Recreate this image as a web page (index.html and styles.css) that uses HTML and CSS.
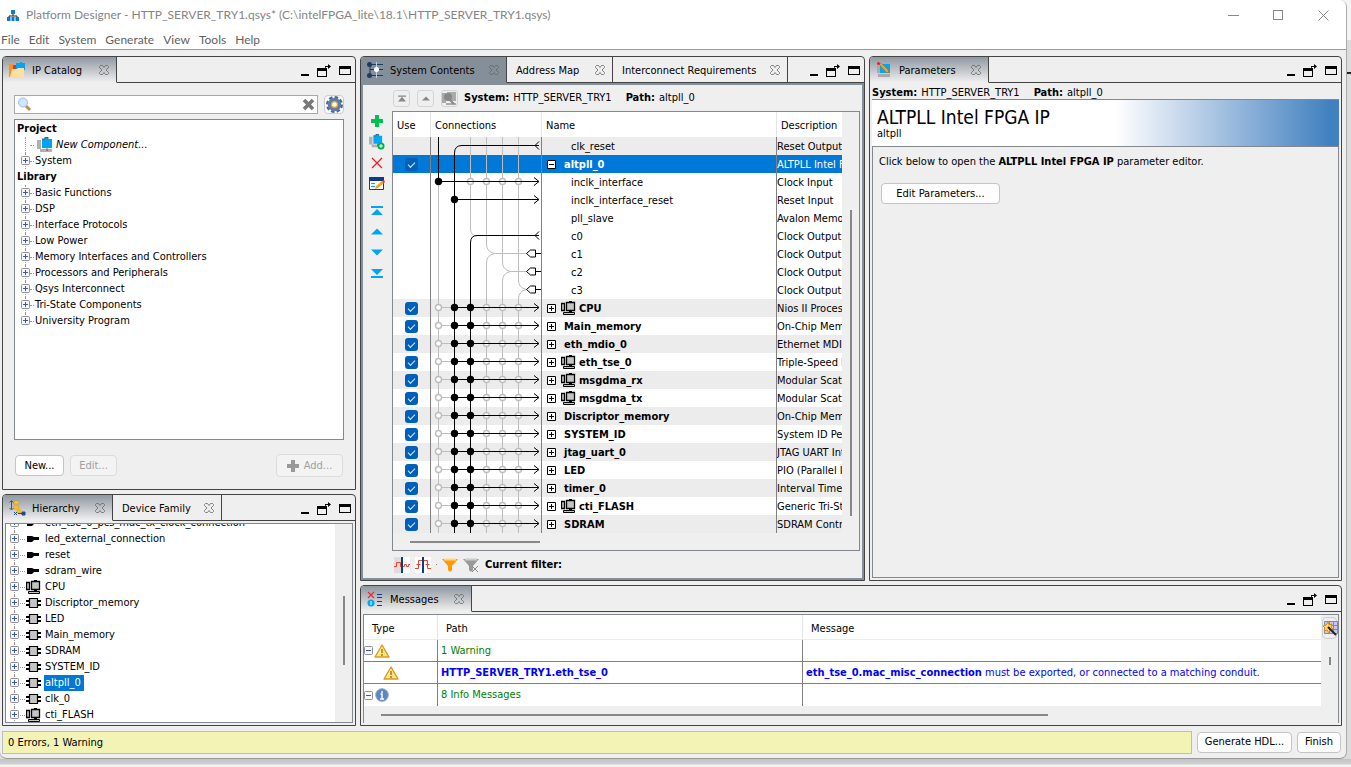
FILE: index.html
```html
<!DOCTYPE html>
<html lang="en">
<head>
<meta charset="utf-8">
<title>Platform Designer - HTTP_SERVER_TRY1.qsys*</title>
<link rel="stylesheet" href="styles.css">
</head>
<body>
<svg class="defs" aria-hidden="true">
  <symbol id="close" viewBox="0 0 10 10"><path d="M1.500.5h2L5 2.500 6.500.5h2l1 1v1L7 5l2.500 2.500v1l-1 1h-2L5 7.500 3.500 9.500h-2l-1-1v-1L3 5 .5 2.500v-1z" fill="none" stroke="#666" stroke-width=".8"/></symbol>
  <symbol id="min" viewBox="0 0 8 12"><path d="M0 9h8v2H0z"/></symbol>
  <symbol id="detach" viewBox="0 0 14 13"><path d="M0 4h10v9H0zM1 7v5h8V7z" fill-rule="evenodd"/><path d="M8 3.500V2h3V0l3 2.500L11 5V3H9v1z"/></symbol>
  <symbol id="max" viewBox="0 0 12 10"><path d="M0 0h12v9H0zM1 3v5h10V3z" fill-rule="evenodd"/></symbol>
  <symbol id="plus" viewBox="0 0 9 9"><rect x=".5" y=".5" width="8" height="8" rx="1" fill="#f7f7f7" stroke="#919191"/><path d="M2 4.500h5M4.500 2v5" stroke="#3b57a5"/></symbol>
  <symbol id="minus" viewBox="0 0 9 9"><rect x=".5" y=".5" width="8" height="8" rx="1" fill="#f7f7f7" stroke="#919191"/><path d="M2 4.500h5" stroke="#3b57a5"/></symbol>
  <symbol id="bplus" viewBox="0 0 9 9"><path d="M.5.5h8v8h-8z" fill="#fff" stroke="#000"/><path d="M2 4.500h5M4.500 2v5" stroke="#000"/></symbol>
  <symbol id="bminus" viewBox="0 0 9 9"><path d="M.5.5h8v8h-8z" fill="#fff" stroke="#000"/><path d="M2 4.500h5" stroke="#000"/></symbol>
  <symbol id="port" viewBox="0 0 16 16"><path d="M1 5h5l2 1h5v3H8l-2 2H1z"/></symbol>
  <symbol id="chip" viewBox="0 0 16 16"><path d="M0 6h4M0 10h4M12 6h3M12 10h3" stroke="#000" stroke-width="2"/><path d="M3.500 3.500h8v9h-8z" fill="#c4c4c4" stroke="#000" stroke-width="1.200"/></symbol>
  <symbol id="cpu" viewBox="0 0 16 16"><path d="M.5 3.500h3v7h-3z" fill="#c4c4c4" stroke="#000" stroke-width="1.300"/><path d="M5.500 2.500h8v8h-8z" fill="#c4c4c4" stroke="#000" stroke-width="1.300"/><path d="M8 1h3v1H8zM8 11h3v2H8z"/><path d="M2.500 12.500h11v2h-11z" fill="#c4c4c4" stroke="#000"/></symbol>
  <symbol id="comp" viewBox="0 0 16 16"><path d="M0 3h4v9H0zM3 12h12v3H3z" fill="#b0b0b0"/><path d="M5 2h3V0h3v2h4v9H5z" fill="#00a5f5"/><path d="M5 2h3V0h3v2M10 11v3" stroke="#444" stroke-width=".8" fill="none"/></symbol>
  <symbol id="warn" viewBox="0 0 16 14"><path d="M8 1 15 13H1z" fill="#ffe48a" stroke="#dd9b1f" stroke-width="1.400" stroke-linejoin="round"/><path d="M8 3 4 10l4-2z" fill="#fff3b0"/><path d="M8 5v4M8 10v2" stroke="#c48a10" stroke-width="1.800"/></symbol>
  <symbol id="tri" viewBox="0 0 12 6"><path d="M6 0l6 6H0z"/></symbol>
  <symbol id="top" viewBox="0 0 12 9"><path d="M0 0h12v2H0zM6 2l6 7H0z"/></symbol>
  <g id="lane"><path class="g" d="M7.500 8.500h16"/>
    <use href="#ring" x="7.500" y="8.500"/><use href="#dot" x="23.500" y="8.500"/><use href="#dot" x="39.500" y="8.500"/><use href="#ring" x="55.500" y="8.500"/><use href="#ring" x="71.500" y="8.500"/><use href="#ring" x="87.500" y="8.500"/><path class="k" d="M23.500 8.500h84M103 4.500l5 4-5 4"/></g>
  <circle id="dot" r="3.700"/>
  <circle id="ring" r="3" fill="#fff" stroke="#bdbdbd" stroke-width="1.400"/>
</svg>

<div class="window">
  <header class="titlebar">
    <svg width="12" height="11" viewBox="0 0 12 11"><path d="M6 3v3M2 8V6h8v2" stroke="#223" fill="none"/><path d="M4 0h4v4H4zM0 7h3.500v4H0zM4.500 7h3v4h-3zM8.500 7H12v4H8.500z" fill="#0a78d0"/></svg>
    <h1>Platform Designer - HTTP_SERVER_TRY1.qsys* (C:\intelFPGA_lite\18.1\HTTP_SERVER_TRY1.qsys)</h1>
    <div class="winbtns">
      <button aria-label="Minimize"><svg width="11" height="11"><path d="M0 5.500h11" stroke="#888"/></svg></button>
      <button aria-label="Maximize"><svg width="11" height="11"><rect x=".5" y=".5" width="9" height="9" fill="none" stroke="#888"/></svg></button>
      <button aria-label="Close"><svg width="11" height="11"><path d="M.5.5l10 10M10.500.5l-10 10" stroke="#888"/></svg></button>
    </div>
  </header>
  <nav class="menubar"><button>File</button><button>Edit</button><button>System</button><button>Generate</button><button>View</button><button>Tools</button><button>Help</button></nav>

  <main class="work">
    <div class="side">
      <section class="panel catalog">
        <div class="tabs">
          <div class="tab on t-ip"><svg class="ticon" width="17" height="16" viewBox="0 0 17 16"><path d="M0 2h4v13H0z" fill="#ff9020"/><path d="M4 3h3v6H4z" fill="#d83a2c"/><path d="M7 1h4V0h2v1h3v7H7z" fill="#00a5f5"/><path d="M1 15 3 7h5l1-1h6v9z" fill="#ffe0a0"/></svg><span>IP Catalog</span><button aria-label="Close tab"><svg width="10" height="10"><use href="#close"/></svg></button></div>
          <div class="pbtns"><button aria-label="Minimize panel"><svg width="8" height="12"><use href="#min"/></svg></button><button aria-label="Detach panel"><svg width="14" height="13"><use href="#detach"/></svg></button><button aria-label="Maximize panel"><svg width="12" height="10"><use href="#max"/></svg></button></div>
        </div>
        <div class="catbody">
          <div class="searchrow">
            <div class="search">
              <svg width="15" height="15" viewBox="0 0 15 15"><path d="M9 9l4 4" stroke="#c98a4a" stroke-width="3"/><circle cx="6" cy="5.500" r="4.500" fill="#cfe6fb" stroke="#9dbfe4"/></svg>
              <input type="text" aria-label="Search IP">
              <button aria-label="Clear search"><svg width="13" height="13" viewBox="0 0 13 13"><path d="M2 2l9 9M11 2l-9 9" stroke="#777" stroke-width="3.600"/></svg></button>
            </div>
            <button class="gear" aria-label="Settings"><svg width="17" height="17" viewBox="0 0 16 16"><circle cx="8" cy="8" r="6.500" fill="none" stroke="#4b6a92" stroke-width="3" stroke-dasharray="3.100 2"/><circle cx="8" cy="8" r="4.500" fill="#fff" stroke="#5f7da5" stroke-width="3.600"/><circle cx="8" cy="8" r="2.800" fill="#fff" stroke="#f0a020" stroke-width="1.200"/></svg></button>
          </div>
          <ul class="tree box">
            <li class="root">Project</li>
            <li class="new"><svg width="16" height="16"><use href="#comp"/></svg><em>New Component...</em></li>
            <li><svg class="p" width="9" height="9"><use href="#plus"/></svg>System</li>
            <li class="root">Library</li>
            <li><svg class="p" width="9" height="9"><use href="#plus"/></svg>Basic Functions</li>
            <li><svg class="p" width="9" height="9"><use href="#plus"/></svg>DSP</li>
            <li><svg class="p" width="9" height="9"><use href="#plus"/></svg>Interface Protocols</li>
            <li><svg class="p" width="9" height="9"><use href="#plus"/></svg>Low Power</li>
            <li><svg class="p" width="9" height="9"><use href="#plus"/></svg>Memory Interfaces and Controllers</li>
            <li><svg class="p" width="9" height="9"><use href="#plus"/></svg>Processors and Peripherals</li>
            <li><svg class="p" width="9" height="9"><use href="#plus"/></svg>Qsys Interconnect</li>
            <li><svg class="p" width="9" height="9"><use href="#plus"/></svg>Tri-State Components</li>
            <li><svg class="p" width="9" height="9"><use href="#plus"/></svg>University Program</li>
          </ul>
          <div class="catbtns"><button class="btn b-new">New...</button><button class="btn b-edit" disabled>Edit...</button><button class="btn b-add" disabled><svg width="12" height="12"><path d="M4 0h4v4h4v4H8v4H4V8H0V4h4z" fill="#999"/></svg>Add...</button></div>
        </div>
      </section>

      <section class="panel hier">
        <div class="tabs">
          <div class="tab on t-hi"><svg class="ticon" width="17" height="16" viewBox="0 0 17 16"><path d="M2.500 1v8M.5 2.500l2-2 2 2M.5 8l2 2 2-2" stroke="#456" fill="none"/><path d="M5 1h5v3H5zM5 6h5v3H5zM8 10h4v3H8z" fill="#ffc530" stroke="#c88c10" stroke-width=".4"/><path d="M5 12l3 3M8 12l-3 3M9 13.500h4M13 12h3v3h-3z" stroke="#234a80" fill="#234a80"/></svg><span>Hierarchy</span><button aria-label="Close tab"><svg width="10" height="10"><use href="#close"/></svg></button></div>
          <div class="tab t-df"><span>Device Family</span><button aria-label="Close tab"><svg width="10" height="10"><use href="#close"/></svg></button></div>
          <div class="pbtns"><button aria-label="Minimize panel"><svg width="8" height="12"><use href="#min"/></svg></button><button aria-label="Detach panel"><svg width="14" height="13"><use href="#detach"/></svg></button><button aria-label="Maximize panel"><svg width="12" height="10"><use href="#max"/></svg></button></div>
        </div>
        <div class="box hbox">
          <ul class="htree">
            <li><svg class="p" width="9" height="9"><use href="#plus"/></svg><svg width="16" height="16"><use href="#port"/></svg><span>eth_tse_0_pcs_mac_tx_clock_connection</span></li>
            <li><svg class="p" width="9" height="9"><use href="#plus"/></svg><svg width="16" height="16"><use href="#port"/></svg><span>led_external_connection</span></li>
            <li><svg class="p" width="9" height="9"><use href="#plus"/></svg><svg width="16" height="16"><use href="#port"/></svg><span>reset</span></li>
            <li><svg class="p" width="9" height="9"><use href="#plus"/></svg><svg width="16" height="16"><use href="#port"/></svg><span>sdram_wire</span></li>
            <li><svg class="p" width="9" height="9"><use href="#plus"/></svg><svg width="16" height="16"><use href="#cpu"/></svg><span>CPU</span></li>
            <li><svg class="p" width="9" height="9"><use href="#plus"/></svg><svg width="16" height="16"><use href="#chip"/></svg><span>Discriptor_memory</span></li>
            <li><svg class="p" width="9" height="9"><use href="#plus"/></svg><svg width="16" height="16"><use href="#chip"/></svg><span>LED</span></li>
            <li><svg class="p" width="9" height="9"><use href="#plus"/></svg><svg width="16" height="16"><use href="#chip"/></svg><span>Main_memory</span></li>
            <li><svg class="p" width="9" height="9"><use href="#plus"/></svg><svg width="16" height="16"><use href="#chip"/></svg><span>SDRAM</span></li>
            <li><svg class="p" width="9" height="9"><use href="#plus"/></svg><svg width="16" height="16"><use href="#chip"/></svg><span>SYSTEM_ID</span></li>
            <li><svg class="p" width="9" height="9"><use href="#plus"/></svg><svg width="16" height="16"><use href="#chip"/></svg><span class="picked">altpll_0</span></li>
            <li><svg class="p" width="9" height="9"><use href="#plus"/></svg><svg width="16" height="16"><use href="#chip"/></svg><span>clk_0</span></li>
            <li><svg class="p" width="9" height="9"><use href="#plus"/></svg><svg width="16" height="16"><use href="#cpu"/></svg><span>cti_FLASH</span></li>
          </ul>
          <div class="vbar"><i></i></div>
        </div>
      </section>
    </div>

    <div class="right">
      <div class="upper">
        <section class="panel contents">
          <div class="tabs">
            <div class="tab on focus t-sc"><svg class="ticon" width="17" height="16" viewBox="0 0 17 16"><path d="M3 2.500h13M3 7.500h13M3 13.500h13M3 2v12" stroke="#1f3a5c" fill="none"/><path d="M9.500 0v16" stroke="#b9d4ee"/><circle cx="2.500" cy="2.500" r="2.500" fill="#1f3a5c"/><circle cx="2.500" cy="13.500" r="2.500" fill="#1f3a5c"/><circle cx="9.500" cy="7.500" r="2.500" fill="#fff"/></svg><span>System Contents</span><button aria-label="Close tab"><svg width="10" height="10"><use href="#close"/></svg></button></div>
            <div class="tab t-am"><span>Address Map</span><button aria-label="Close tab"><svg width="10" height="10"><use href="#close"/></svg></button></div>
            <div class="tab t-ir"><span>Interconnect Requirements</span><button aria-label="Close tab"><svg width="10" height="10"><use href="#close"/></svg></button></div>
            <div class="pbtns"><button aria-label="Minimize panel"><svg width="8" height="12"><use href="#min"/></svg></button><button aria-label="Detach panel"><svg width="14" height="13"><use href="#detach"/></svg></button><button aria-label="Maximize panel"><svg width="12" height="10"><use href="#max"/></svg></button></div>
          </div>
          <div class="cbody">
            <div class="tools">
              <button aria-label="Add"><svg width="12" height="12"><path d="M4 0h4v4h4v4H8v4H4V8H0V4h4z" fill="#00c050"/></svg></button>
              <button aria-label="Add component"><svg width="16" height="16" viewBox="0 0 16 16"><use href="#comp" width="14" height="14"/><circle cx="12" cy="12" r="3.500" fill="#00b050"/><path d="M10 12h4M12 10v4" stroke="#fff"/></svg></button>
              <button aria-label="Remove"><svg width="12" height="12"><path d="M1 1l10 10M11 1 1 11" stroke="#ee1c25" stroke-width="1.300"/></svg></button>
              <button aria-label="Edit"><svg width="16" height="14" viewBox="0 0 16 14"><path d="M.5 1.500h14v11H.5z" fill="#fff" stroke="#0a3c8c"/><path d="M0 0h15v4H0z" fill="#0a3c8c"/><path d="M2 6.500h4M2 9.500h4" stroke="#00a5f5"/><path d="M6 12l1-3 6-5 2 2-6 5z" fill="#ffa020"/><path d="M13 4l2-1 1 2-1 1z" fill="#e33"/></svg></button>
              <button class="gap" aria-label="Move to top"><svg width="12" height="9" viewBox="0 0 12 9" fill="#00a5f5"><path d="M0 0h12v2H0zM6 3l6 6H0z"/></svg></button>
              <button aria-label="Move up"><svg width="12" height="7" fill="#00a5f5"><use href="#tri"/></svg></button>
              <button aria-label="Move down"><svg class="flip" width="12" height="7" fill="#00a5f5"><use href="#tri"/></svg></button>
              <button aria-label="Move to bottom"><svg class="flip" width="12" height="9" viewBox="0 0 12 9" fill="#00a5f5"><path d="M0 0h12v2H0zM6 3l6 6H0z"/></svg></button>
            </div>
            <div class="cmain">
              <div class="crumbs">
                <button class="sq" disabled aria-label="Go to top"><svg width="8" height="7" fill="#888"><use href="#top"/></svg></button>
                <button class="sq" disabled aria-label="Go up"><svg width="8" height="5" fill="#888"><use href="#tri"/></svg></button>
                <button class="sq" disabled aria-label="Drill in"><svg width="15" height="15" viewBox="0 0 15 15"><path d="M0 2h4v10H0zM5 1h9v9H5zM4 12h10v2H4z" fill="#aaa"/><circle cx="6" cy="6" r="4" fill="#888"/><path d="M8 9l4 4" stroke="#888" stroke-width="2"/></svg></button>
                <b>System:</b><span class="sys">HTTP_SERVER_TRY1</span><b>Path:</b><span>altpll_0</span>
              </div>
              <div class="grid">
                <div class="gridview">
                  <table class="ctable">
                    <colgroup><col class="c-use"><col class="c-con"><col class="c-name"><col></colgroup>
                    <thead><tr><th>Use</th><th>Connections</th><th>Name</th><th>Description</th></tr></thead>
                    <tbody>
                      <tr class="odd"><td></td><td></td><td class="sub">clk_reset</td><td>Reset Output</td></tr>
                      <tr class="sel"><td><input type="checkbox" checked aria-label="Use altpll_0"></td><td></td><td class="mod"><svg width="9" height="9"><use href="#bminus"/></svg>altpll_0</td><td>ALTPLL Intel FPGA IP</td></tr>
                      <tr><td></td><td></td><td class="sub">inclk_interface</td><td>Clock Input</td></tr>
                      <tr><td></td><td></td><td class="sub">inclk_interface_reset</td><td>Reset Input</td></tr>
                      <tr><td></td><td></td><td class="sub">pll_slave</td><td>Avalon Memory Mapped</td></tr>
                      <tr><td></td><td></td><td class="sub">c0</td><td>Clock Output</td></tr>
                      <tr><td></td><td></td><td class="sub">c1</td><td>Clock Output</td></tr>
                      <tr><td></td><td></td><td class="sub">c2</td><td>Clock Output</td></tr>
                      <tr><td></td><td></td><td class="sub">c3</td><td>Clock Output</td></tr>
                      <tr class="odd"><td><input type="checkbox" checked aria-label="Use CPU"></td><td></td><td class="mod"><svg width="9" height="9"><use href="#bplus"/></svg><svg class="ci" width="16" height="16"><use href="#cpu"/></svg>CPU</td><td>Nios II Processor</td></tr>
                      <tr><td><input type="checkbox" checked aria-label="Use Main_memory"></td><td></td><td class="mod"><svg width="9" height="9"><use href="#bplus"/></svg>Main_memory</td><td>On-Chip Memory</td></tr>
                      <tr class="odd"><td><input type="checkbox" checked aria-label="Use eth_mdio_0"></td><td></td><td class="mod"><svg width="9" height="9"><use href="#bplus"/></svg>eth_mdio_0</td><td>Ethernet MDIO</td></tr>
                      <tr><td><input type="checkbox" checked aria-label="Use eth_tse_0"></td><td></td><td class="mod"><svg width="9" height="9"><use href="#bplus"/></svg><svg class="ci" width="16" height="16"><use href="#cpu"/></svg>eth_tse_0</td><td>Triple-Speed Ethernet</td></tr>
                      <tr class="odd"><td><input type="checkbox" checked aria-label="Use msgdma_rx"></td><td></td><td class="mod"><svg width="9" height="9"><use href="#bplus"/></svg><svg class="ci" width="16" height="16"><use href="#cpu"/></svg>msgdma_rx</td><td>Modular Scatter-Gather</td></tr>
                      <tr><td><input type="checkbox" checked aria-label="Use msgdma_tx"></td><td></td><td class="mod"><svg width="9" height="9"><use href="#bplus"/></svg><svg class="ci" width="16" height="16"><use href="#cpu"/></svg>msgdma_tx</td><td>Modular Scatter-Gather</td></tr>
                      <tr class="odd"><td><input type="checkbox" checked aria-label="Use Discriptor_memory"></td><td></td><td class="mod"><svg width="9" height="9"><use href="#bplus"/></svg>Discriptor_memory</td><td>On-Chip Memory</td></tr>
                      <tr><td><input type="checkbox" checked aria-label="Use SYSTEM_ID"></td><td></td><td class="mod"><svg width="9" height="9"><use href="#bplus"/></svg>SYSTEM_ID</td><td>System ID Peripheral</td></tr>
                      <tr class="odd"><td><input type="checkbox" checked aria-label="Use jtag_uart_0"></td><td></td><td class="mod"><svg width="9" height="9"><use href="#bplus"/></svg>jtag_uart_0</td><td>JTAG UART Intel</td></tr>
                      <tr><td><input type="checkbox" checked aria-label="Use LED"></td><td></td><td class="mod"><svg width="9" height="9"><use href="#bplus"/></svg>LED</td><td>PIO (Parallel I/O)</td></tr>
                      <tr class="odd"><td><input type="checkbox" checked aria-label="Use timer_0"></td><td></td><td class="mod"><svg width="9" height="9"><use href="#bplus"/></svg>timer_0</td><td>Interval Timer</td></tr>
                      <tr><td><input type="checkbox" checked aria-label="Use cti_FLASH"></td><td></td><td class="mod"><svg width="9" height="9"><use href="#bplus"/></svg><svg class="ci" width="16" height="16"><use href="#cpu"/></svg>cti_FLASH</td><td>Generic Tri-State</td></tr>
                      <tr class="odd"><td><input type="checkbox" checked aria-label="Use SDRAM"></td><td></td><td class="mod"><svg width="9" height="9"><use href="#bplus"/></svg>SDRAM</td><td>SDRAM Controller</td></tr>
                    </tbody>
                  </table>
                  <svg class="wires" width="110" height="396" viewBox="0 0 110 396">
                    <g class="g">
                      <path d="M7.500 44V396M39.500 0V92q0 6 6 7M55.500 0V107q0 8 8 9.500h32M71.500 0V125q0 8 8 9.500h16M87.500 0V143q0 8 8 9.500"/>
                      <path d="M55.500 396V126q0-8 8-9.500M71.500 396V144q0-8 8-9.500M87.500 396V162q0-8 8-9.500"/>
                    </g>
                    <use href="#ring" x="39.500" y="44.500"/><use href="#ring" x="55.500" y="44.500"/><use href="#ring" x="71.500" y="44.500"/><use href="#ring" x="87.500" y="44.500"/>
                    <g class="k">
                      <path d="M7.500 0V44.500h100M103 40.500l5 4-5 4M108 8.500H31q-7.500 0-7.500 7.500V396M108 4.500l-4 4 4 4M23.500 62.500h84M103 58.500l5 4-5 4M108 98.500H46q-6.500 0-6.500 7.500V396M108 94.500l-4 4 4 4"/>
                      <path d="M95.500 116.500l4-3.500h5v7h-5zM104.500 116.500h5.500M95.500 134.500l4-3.500h5v7h-5zM104.500 134.500h5.500M95.500 152.500l4-3.500h5v7h-5zM104.500 152.500h5.500"/>
                    </g>
                    <use href="#dot" x="7.500" y="44.500"/><use href="#dot" x="23.500" y="62.500"/>
                    <use href="#lane" y="162"/><use href="#lane" y="180"/><use href="#lane" y="198"/><use href="#lane" y="216"/><use href="#lane" y="234"/><use href="#lane" y="252"/><use href="#lane" y="270"/><use href="#lane" y="288"/><use href="#lane" y="306"/><use href="#lane" y="324"/><use href="#lane" y="342"/><use href="#lane" y="360"/><use href="#lane" y="378"/>
                  </svg>
                </div>
                <div class="vbar"><i></i></div>
                <div class="hbar"><i></i></div>
              </div>
              <div class="filter">
                <button aria-label="Clock domains"><svg width="16" height="16"><path d="M0 0h8v16H0z" fill="#ddd"/><path d="M8 0h8v16H8z" fill="#fff"/><path d="M0 9.500h2.500v-4h4v4h4v-2h2v2h2v-2h2" stroke="#f04030" fill="none"/><path d="M8 0v16" stroke="#00408c" stroke-width="2"/></svg></button>
                <button aria-label="Reset domains"><svg width="16" height="16"><path d="M0 0h16v16H0z" fill="#fff"/><path d="M0 11.500h3.500v-8h9v8H16M1.500 7.500h4M10.500 7.500h4" stroke="#f04030" fill="none"/><path d="M8 0v16" stroke="#00408c" stroke-width="2"/></svg></button>
                <i class="speck"></i>
                <button aria-label="Filter"><svg width="16" height="14"><path d="M0 1h16l-6 7v4l-2 2-2-2V8z" fill="#ff9800"/><path d="M2 1.500h12" stroke="#ffd48a" stroke-width="2"/></svg></button>
                <button class="nofilter" aria-label="Clear filter"><svg width="16" height="14"><path d="M0 1h16l-6 7v4l-2 2-2-2V8z" fill="#999"/><path d="M2 1.500h12" stroke="#ccc" stroke-width="2"/><path d="M9 8l6 6M15 8l-6 6" stroke="#888"/></svg></button>
                <b>Current filter:</b>
              </div>
            </div>
          </div>
        </section>

        <section class="panel params">
          <div class="tabs">
            <div class="tab on t-pa"><svg class="ticon" width="17" height="16" viewBox="0 0 17 16"><path d="M1 3h3v8H1zM2 12h12v3H2z" fill="#aaa"/><path d="M4 2h10v9H4z" fill="#00a5f5"/><path d="M3 2l2-1 7 7 1 3-3-1z" fill="#ffa020" stroke="#b86a00" stroke-width=".5"/><circle cx="2.500" cy="1.500" r="1.500" fill="#e22"/></svg><span>Parameters</span><button aria-label="Close tab"><svg width="10" height="10"><use href="#close"/></svg></button></div>
            <div class="pbtns"><button aria-label="Minimize panel"><svg width="8" height="12"><use href="#min"/></svg></button><button aria-label="Detach panel"><svg width="14" height="13"><use href="#detach"/></svg></button><button aria-label="Maximize panel"><svg width="12" height="10"><use href="#max"/></svg></button></div>
          </div>
          <div class="pbody">
            <div class="pcrumb"><b>System:</b><span class="sys">HTTP_SERVER_TRY1</span><b>Path:</b><span>altpll_0</span></div>
            <div class="banner"><h2>ALTPLL Intel FPGA IP</h2><p>altpll</p></div>
            <div class="box pbox"><p>Click below to open the <b>ALTPLL Intel FPGA IP</b> parameter editor.</p><button class="btn b-par">Edit Parameters...</button></div>
          </div>
        </section>
      </div>

      <section class="panel messages">
        <div class="tabs">
          <div class="tab on t-ms"><svg class="ticon" width="17" height="16" viewBox="0 0 17 16"><path d="M1 1l6 6M7 1 1 7" stroke="#ee2a20" stroke-width="1.200"/><circle cx="4" cy="12" r="3.500" fill="#00a5f5"/><path d="M4 10v4" stroke="#fff"/><path d="M10 3.500h5M10 6.500h5M10 10.500h5M10 14.500h5" stroke="#0a3c9c"/></svg><span>Messages</span><button aria-label="Close tab"><svg width="10" height="10"><use href="#close"/></svg></button></div>
          <div class="pbtns"><button aria-label="Minimize panel"><svg width="8" height="12"><use href="#min"/></svg></button><button aria-label="Detach panel"><svg width="14" height="13"><use href="#detach"/></svg></button><button aria-label="Maximize panel"><svg width="12" height="10"><use href="#max"/></svg></button></div>
        </div>
        <div class="box mbox">
          <table class="mtable">
            <colgroup><col class="m-type"><col class="m-path"><col></colgroup>
            <thead><tr><th>Type</th><th>Path</th><th>Message</th></tr></thead>
            <tbody>
              <tr><td><div class="ic"><svg width="9" height="9"><use href="#minus"/></svg><svg width="16" height="14"><use href="#warn"/></svg></div></td><td class="ok">1 Warning</td><td></td></tr>
              <tr><td><div class="ic in"><svg width="16" height="14"><use href="#warn"/></svg></div></td><td class="link"><b>HTTP_SERVER_TRY1.eth_tse_0</b></td><td class="link"><b>eth_tse_0.mac_misc_connection</b> must be exported, or connected to a matching conduit.</td></tr>
              <tr><td><div class="ic"><svg width="9" height="9"><use href="#minus"/></svg><svg width="16" height="14" viewBox="0 0 14 14"><circle cx="7" cy="7" r="6.300" fill="#5b87c0" stroke="#8aa6cc"/><path d="M7 3v2M5.500 6H7v5M5 11h4" stroke="#fff" stroke-width="1.400" fill="none"/></svg></div></td><td class="ok">8 Info Messages</td><td></td></tr>
            </tbody>
          </table>
          <div class="mside"><button class="wand" aria-label="Column settings"><svg width="16" height="16" viewBox="0 0 16 16"><path d="M2.500 1.500h13v12h-13zM2 5.500h13M2 9.500h13M7.500 1v12M11.500 1v12" fill="#c8c8ee" stroke="#8484b8"/><path d="M6 2l1 3 3-1-1 3 2 2-3 1-1 3-2-3-3 1 1-3-2-2 3-1z" fill="#ffd860" stroke="#d88a10"/><path d="M6 7l8 8" stroke="#222" stroke-width="2"/></svg></button><div class="vbar"><i></i></div></div>
          <div class="hbar"><i></i></div>
        </div>
      </section>
    </div>
  </main>

  <footer class="status"><output>0 Errors, 1 Warning</output><button class="btn b-gen">Generate HDL...</button><button class="btn b-fin">Finish</button></footer>
</div>
</body>
</html>
```
FILE: styles.css
```css
* { box-sizing: border-box; }
:root { --ui: "DejaVu Sans Condensed", "DejaVu Sans", sans-serif; --line: #444; --edge: #828790; --face: #efefef; }
body { margin: 0; height: 100vh; padding: 0 4px 8px 0; font: 11px/16px var(--ui); color: #000;
  background: linear-gradient(#f4f4f4 0 40px, #dcdcdc 40px 72px, #222 72px 74px, #dcdcdc 74px calc(100% - 8px), #c3c3c3 calc(100% - 8px), #cfcfcf calc(100% - 3px), #f3f3f3 calc(100% - 2px)); }
.defs { position: absolute; width: 0; height: 0; }
button { font: inherit; color: inherit; background: none; border: 0; padding: 0; margin: 0; display: flex; align-items: center; justify-content: center; }
svg { display: block; flex: none; }
ul { list-style: none; margin: 0; padding: 0; }
p, h1, h2 { margin: 0; font-weight: normal; }

.window { height: 100%; display: flex; flex-direction: column; background: var(--face); border-right: 1px solid #aaa; border-bottom: 1px solid #999; border-radius: 0 7px 7px 7px; overflow: hidden; }
.titlebar { display: flex; align-items: center; height: 30px; padding-left: 7px; gap: 7px; background: #fff; }
.titlebar h1 { font: 12px/16px Lato, "Noto Sans", sans-serif; color: #858585; flex: 1; white-space: nowrap; }
.winbtns { display: flex; }
.winbtns button { width: 45px; height: 28px; }
.menubar { display: flex; height: 20px; gap: 9px; padding-left: 1px; background: #fff; border-bottom: 1px solid #999; font: 12px/16px Lato, "Noto Sans", sans-serif; color: #5f5f5f; }

.work { flex: 1; min-height: 0; display: flex; gap: 4px; padding: 6px 4px 0 2px; }
.side { width: 354px; display: flex; flex-direction: column; gap: 4px; }
.right { flex: 1; min-width: 0; display: flex; flex-direction: column; gap: 4px; }
.upper { flex: 1; min-height: 0; display: flex; gap: 4px; }
.panel { border: 1px solid var(--line); border-radius: 4px 4px 0 0; display: flex; flex-direction: column; min-height: 0; background: var(--face); overflow: hidden; }
.catalog { flex: 1; }
.hier { height: 232px; }
.contents { width: 505px; }
.params { flex: 1; min-width: 0; }
.messages { height: 141px; }

.tabs { display: flex; height: 26px; flex: none; }
.tab { display: flex; align-items: center; padding: 0 7px 0 9px; border-right: 1px solid var(--line); border-bottom: 1px solid var(--line); white-space: nowrap; }
.tab span { flex: 1; padding-top: 2px; }
.tab.on { padding-left: 6px; background: linear-gradient(#8f97a0, var(--face)); border-bottom-color: var(--face); }
.tab.focus { background: #858f99; border-bottom-color: #858f99; }
.ticon { margin-right: 6px; }
.t-ip { width: 114px; }
.t-hi { width: 110px; }
.t-df { width: 109px; }
.t-sc { width: 146px; }
.t-am { width: 106px; }
.t-ir { width: 175px; }
.t-pa { width: 119px; }
.t-ms { width: 111px; }
.pbtns { flex: 1; display: flex; justify-content: flex-end; align-items: center; gap: 8px; padding: 2px 4px 0 0; border-bottom: 1px solid var(--line); }

.box { border: 1px solid var(--edge); background: #fff; }
.btn { height: 21px; background: #fdfdfd; border: 1px solid #c4c4c4; border-radius: 4px; white-space: nowrap; }
.btn:disabled { background: #f3f3f3; border-color: #dcdcdc; color: #a0a0a0; }

.catbody { flex: 1; min-height: 0; display: flex; flex-direction: column; padding: 12px 11px 12px 11px; }
.searchrow { display: flex; gap: 6px; margin-bottom: 5px; }
.search { flex: 1; display: flex; align-items: center; height: 19px; padding: 0 2px; background: #fff; border: 1px solid #a8a8a8; }
.search input { flex: 1; min-width: 0; border: 0; outline: 0; background: none; font: inherit; }
.gear { width: 20px; height: 19px; background: #fafafa; border: 1px solid #ccc; border-radius: 4px; }
.tree { flex: 1; min-height: 0; padding: 1px 0 0 6px; }
.tree li { position: relative; display: flex; align-items: center; gap: 5px; height: 16px; }
.tree .root { margin-left: -4px; font-weight: bold; }
.tree .new { padding-left: 16px; gap: 3px; }
.tree li:not(.root)::before { content: ""; position: absolute; left: 4px; top: 0; height: 16px; border-left: 1px dotted #999; }
.tree li:not(.root)::after { content: ""; position: absolute; left: 9px; top: 8px; width: 4px; border-top: 1px dotted #999; }
.tree .new::after { left: 5px; width: 11px; }
.tree li:last-child::before { height: 8px; }
.tree .p, .htree .p { position: relative; z-index: 1; margin-bottom: 1px; }
.catbtns { display: flex; align-items: center; gap: 6px; padding: 14px 1px 0; }
.b-new { width: 49px; }
.b-edit { width: 47px; }
.b-add { width: 67px; height: 23px; margin-left: auto; gap: 5px; }

.hbox { flex: 1; min-height: 0; margin: 2px; display: flex; overflow: hidden; }
.htree { flex: 1; margin-top: -9px; padding-left: 4px; }
.htree li { position: relative; display: flex; align-items: center; height: 16px; }
.htree li::before { content: ""; position: absolute; left: 4px; top: 0; height: 16px; border-left: 1px dotted #999; }
.htree li::after { content: ""; position: absolute; left: 10px; top: 8px; width: 5px; border-top: 1px dotted #999; }
.htree .p { margin-right: 7px; }
.htree span { margin-left: 2px; padding: 0 1px; }
.htree .picked { background: #0078d7; color: #fff; padding-right: 3px; }
.vbar { width: 17px; background: var(--face); display: flex; justify-content: center; flex: none; }
.vbar i { width: 2px; background: #888; }
.hbox .vbar i { margin-top: 72px; height: 69px; }

.cbody { flex: 1; min-height: 0; display: flex; border: solid #858f99; border-width: 2px; background: var(--face); }
.tools { width: 29px; display: flex; flex-direction: column; padding: 25px 2px 0 0; }
.tools button { height: 21px; }
.tools .gap { margin-top: 6px; }
.flip { transform: scaleY(-1); }
.cmain { flex: 1; min-width: 0; display: flex; flex-direction: column; }
.crumbs { display: flex; align-items: center; height: 26px; padding-left: 1px; }
.crumbs b, .pcrumb b { margin-right: 4px; }
.sys { margin-right: 14px; }
.sq { width: 17px; height: 17px; border: 1px solid #d4d4d4; border-radius: 3px; margin-right: 7px; }
.sq:nth-child(3) { margin-right: 6px; }
.grid { flex: 1; min-height: 0; margin-right: 2px; border: 1px solid var(--edge); display: grid; grid-template: 1fr 17px / 1fr 17px; background: var(--face); }
.gridview { position: relative; overflow: hidden; background: #fff; min-width: 0; }
.ctable { width: 100%; table-layout: fixed; border-collapse: separate; border-spacing: 0; }
.c-use { width: 38px; }
.c-con { width: 111px; }
.c-name { width: 235px; }
.ctable th { height: 25px; padding: 2px 0 0 4px; text-align: left; font-weight: normal; border-right: 1px solid #e5e5e5; }
.ctable th:last-child, .ctable td:last-child { border-right: 0; }
.ctable td { height: 18px; line-height: 16px; padding: 2px 0 0; border-right: 1px solid #808080; white-space: nowrap; overflow: hidden; }
.odd td { background: #ececec; }
.sel td { background: #0078d7; color: #fff; }
.ctable .sub { padding-left: 29px; }
.ctable .mod { font-weight: bold; padding-left: 5px; }
.mod svg { display: inline-block; vertical-align: top; margin: 3px 8px 0 0; }
.mod .ci { margin: -1px 2px 0 -3px; }
.ctable td:first-child { padding: 0; }
.ctable input { appearance: none; display: block; width: 13px; height: 13px; margin: 1px 0 0 12px; border-radius: 3px; background: #005fb8; position: relative; }
.ctable input::after { content: ""; position: absolute; left: 3px; top: 4px; width: 7px; height: 4px; box-sizing: border-box; border: solid #dce9f6; border-width: 0 0 1px 1px; transform: rotate(-45deg); }
.wires { position: absolute; left: 38px; top: 25px; }
.g { fill: none; stroke: #bdbdbd; }
.k { fill: none; stroke: #000; }
.grid .vbar i { margin-top: 98px; height: 306px; }
.hbar { display: flex; align-items: center; background: var(--face); grid-column: 1 / -1; }
.hbar i { height: 2px; background: #888; }
.grid .hbar i { margin-left: 17px; width: 130px; }
.filter { display: flex; align-items: center; height: 27px; gap: 5px; padding: 0 0 0 2px; }
.speck { width: 1px; height: 1px; background: #888; }
.filter b { padding-left: 1px; }

.pbody { flex: 1; min-height: 0; display: flex; flex-direction: column; padding: 1px 2px 2px; }
.pcrumb { display: flex; height: 15px; line-height: 18px; }
.banner { height: 47px; border-top: 1px solid var(--edge); padding: 7px 5px 0; background: linear-gradient(90deg, #fff 52%, #c0d3ea 68%, #4181c0 98%); }
.banner h2 { font-size: 19px; line-height: 20px; }
.banner p { line-height: 14px; }
.pbox { flex: 1; background: var(--face); padding: 7px 6px; }
.b-par { width: 119px; margin: 13px 0 0 2px; }

.mbox { flex: 1; min-height: 0; margin: 2px; display: grid; grid-template: 1fr 17px / 1fr 17px; background: var(--face); }
.mtable { width: 100%; table-layout: fixed; border-collapse: separate; border-spacing: 0; background: #fff; }
.m-type { width: 74px; }
.m-path { width: 365px; }
.mtable th { height: 25px; padding: 3px 8px 0; text-align: left; font-weight: normal; border-right: 1px solid #e5e5e5; border-bottom: 1px solid #ececec; }
.mtable th:last-child, .mtable td:last-child { border-right: 0; }
.mtable td { height: 22px; padding: 0 3px; border-right: 1px solid #808080; border-bottom: 1px solid #808080; white-space: nowrap; overflow: hidden; }
.mtable td:first-child { padding: 0; }
.mtable tr:last-child td { border-bottom: 0; }
.ic { display: flex; align-items: center; gap: 1px; }
.in { padding-left: 19px; }
.ok { color: #008000; }
.link { color: #00f; }
.mside { display: flex; flex-direction: column; align-items: center; padding-top: 2px; }
.wand { width: 15px; height: 22px; border: 1px solid #ccc; border-radius: 4px; }
.mside .vbar i { margin-top: 18px; height: 8px; }
.mbox .hbar i { margin-left: 17px; width: 667px; }

.status { display: flex; align-items: center; height: 32px; padding: 0 5px 0 2px; gap: 5px; }
.status output { flex: 1; height: 23px; line-height: 21px; padding-left: 5px; background: #f3f3b5; border: 1px solid #bdbdbd; }
.b-gen { width: 95px; }
.b-fin { width: 44px; }
```
